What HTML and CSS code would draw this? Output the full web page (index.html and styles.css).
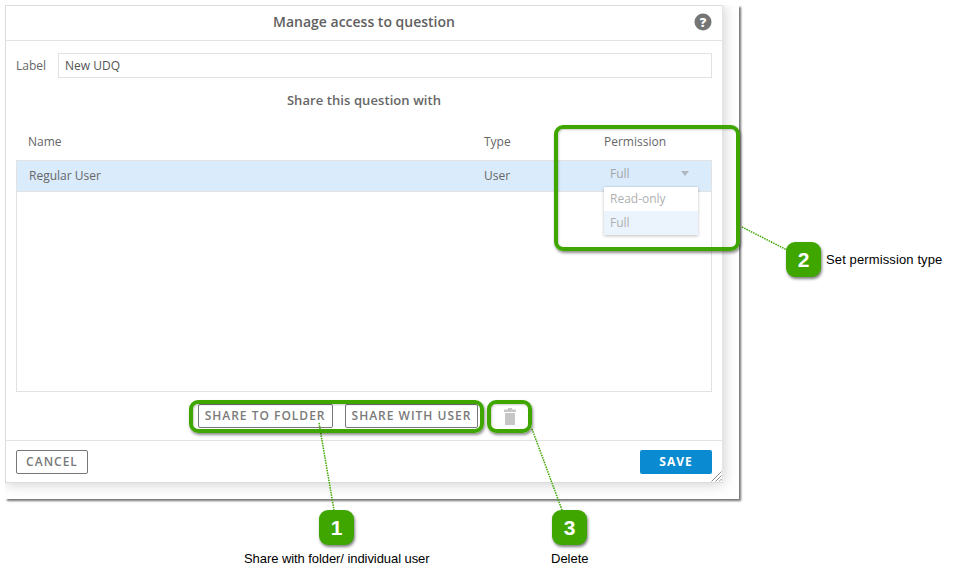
FILE: index.html
```html
<!DOCTYPE html>
<html lang="en">
<head>
<meta charset="utf-8">
<title>Manage access to question</title>
<link rel="stylesheet" href="styles.css">
</head>
<body>
<div class="shot">
  <div class="window">
    <div class="dialog">
      <header class="head">
        <h1 class="title">Manage access to question</h1>
        <svg class="help" width="18" height="18" viewBox="0 0 18 18"><circle cx="9" cy="9" r="8.5" fill="#757575"/><text x="9" y="13.5" text-anchor="middle" class="help-mark">?</text></svg>
      </header>
      <div class="body">
        <div class="label-row">
          <span class="label">Label</span>
          <div class="input">New UDQ</div>
        </div>
        <h2 class="sub">Share this question with</h2>
        <div class="cols">
          <span>Name</span><span>Type</span><span>Permission</span>
        </div>
        <div class="table">
          <div class="row">
            <span class="cell-name">Regular User</span>
            <span>User</span>
            <div class="select">
              <span>Full</span><i class="caret"></i>
              <div class="menu">
                <div class="opt">Read-only</div>
                <div class="opt opt-on">Full</div>
              </div>
            </div>
          </div>
        </div>
        <div class="actions">
          <button class="btn">SHARE TO FOLDER</button>
          <button class="btn">SHARE WITH USER</button>
          <svg class="trash" width="12" height="17" viewBox="0 0 12 17"><path fill="#c6c6c6" d="M4 0h4v1.500h4V4H0V1.500h4zM1 5h10v12H1z"/></svg>
        </div>
      </div>
      <footer class="foot">
        <button class="btn btn-cancel">CANCEL</button>
        <button class="btn-save">SAVE</button>
      </footer>
      <svg class="grip" width="11" height="11" viewBox="0 0 11 11"><path d="M0.500 10.500L10.500 0.500M4.500 10.500L10.500 4.500M8 10.500L10.500 8" stroke="#8a8a8a" stroke-width="1" fill="none"/></svg>
    </div>
  </div>

  <svg class="lines" width="958" height="582" viewBox="0 0 958 582">
    <g stroke="#3fa600" stroke-width="1.500" stroke-dasharray="1.500 1" fill="none">
      <path d="M319 423L334 510"/>
      <path d="M532 429L562 510"/>
      <path d="M742 227L787 250"/>
    </g>
  </svg>
  <div class="ring ring-perm"></div>
  <div class="ring ring-share"></div>
  <div class="ring ring-trash"></div>
  <div class="badge badge-1">1</div>
  <div class="badge badge-2">2</div>
  <div class="badge badge-3">3</div>
  <span class="note note-1">Share with folder/ individual user</span>
  <span class="note note-2">Set permission type</span>
  <span class="note note-3">Delete</span>
</div>
</body>
</html>
```
FILE: styles.css
```css
* { box-sizing: border-box; }
html, body { margin: 0; padding: 0; background: #fff; }
.shot {
  position: relative;
  width: 958px;
  height: 582px;
  padding: 5px 0 0 5px;
  overflow: hidden;
  font-family: "Open Sans", sans-serif;
  font-size: 12px;
  color: #666;
}
.window {
  width: 734px;
  height: 494px;
  background: #fff;
  overflow: hidden;
  box-shadow: 2px 2px 2px rgba(0, 0, 0, .55);
}
.dialog {
  position: relative;
  display: flex;
  flex-direction: column;
  width: 718px;
  height: 478px;
  background: #fff;
  border: 1px solid #dcdcdc;
  border-right-color: #e4e4e4;
  box-shadow: 0 0 14px rgba(0, 0, 0, .22);
}
.head {
  position: relative;
  flex: none;
  height: 35px;
  padding-bottom: 4px;
  display: flex;
  align-items: center;
  justify-content: center;
  border-bottom: 1px solid #e2e2e2;
}
.title {
  margin: 0;
  font-size: 14px;
  font-weight: 600;
  color: #5f5f5f;
}
.help { position: absolute; left: 688px; top: 7px; }
.help-mark { font-family: "Open Sans", sans-serif; font-size: 13px; font-weight: 800; fill: #fff; }
.body {
  flex: 1;
  display: flex;
  flex-direction: column;
  padding: 12px 10px 0;
}
.label-row { display: flex; align-items: center; height: 25px; }
.label { width: 42px; color: #666; }
.input {
  flex: 1;
  height: 25px;
  padding: 0 6px;
  line-height: 23px;
  border: 1px solid #e2e2e2;
  color: #555;
}
.sub {
  margin: 14px 0 0;
  height: 17px;
  line-height: 17px;
  text-align: center;
  font-size: 13px;
  font-weight: 600;
  letter-spacing: .08px;
  color: #666;
}
.cols {
  display: grid;
  grid-template-columns: 456px 120px 1fr;
  height: 51px;
  padding: 24px 0 0 12px;
  line-height: 17px;
  color: #666;
}
.table {
  height: 232px;
  border: 1px solid #e2e2e2;
}
.row {
  display: grid;
  grid-template-columns: 455px 120px 94px;
  align-items: center;
  height: 31px;
  padding: 0 0 2px 12px;
  background: #daebfc;
  border-bottom: 1px solid #e2e2e2;
  color: #666;
}
.select {
  position: relative;
  display: flex;
  align-items: center;
  justify-content: space-between;
  align-self: start;
  height: 26px;
  padding: 0 9px 0 6px;
  border-bottom: 1px solid #d3e1ee;
  color: #a6a6a6;
}
.caret {
  width: 0;
  height: 0;
  border-left: 4.500px solid transparent;
  border-right: 4.500px solid transparent;
  border-top: 5px solid #aeb7bf;
}
.menu {
  position: absolute;
  left: 0;
  top: 26px;
  width: 94px;
  background: #fff;
  box-shadow: 0 1px 3px rgba(0, 0, 0, .25);
}
.opt { height: 24px; padding: 0 6px; line-height: 24px; color: #b0b0b0; }
.opt-on { background: #ebf4fd; }
.actions {
  display: flex;
  align-items: center;
  justify-content: center;
  gap: 12px;
  height: 24px;
  margin-top: 12px;
  padding-right: 14px;
}
.btn {
  height: 24px;
  padding: 0 6px 2px;
  background: #fff;
  border: 1px solid #777;
  border-radius: 2px;
  font-family: "Open Sans", sans-serif;
  font-size: 12px;
  font-weight: 600;
  letter-spacing: 1px;
  color: #7a7a7a;
}
.trash { margin-left: 14px; }
.foot {
  flex: none;
  display: flex;
  align-items: flex-start;
  justify-content: space-between;
  height: 44px;
  margin-top: 12px;
  padding: 9px 10px 0;
  border-top: 1px solid #e2e2e2;
}
.btn-cancel { width: 72px; height: 24px; padding: 0 0 2px; }
.btn-save {
  width: 72px;
  height: 24px;
  padding: 0 0 2px;
  border: 0;
  border-radius: 2px;
  background: #0a8ad0;
  font-family: "Open Sans", sans-serif;
  font-size: 12px;
  font-weight: 700;
  letter-spacing: 1px;
  color: #fff;
}
.grip { position: absolute; right: 0; bottom: 0; }
.lines { position: absolute; left: 0; top: 0; }
.ring {
  position: absolute;
  border: 4px solid #3fa600;
  border-radius: 9px;
  box-shadow: 1px 2px 3px rgba(0, 0, 0, .45), inset 1px 1px 2px rgba(0, 0, 0, .2);
}
.ring-perm { left: 554px; top: 125px; width: 186px; height: 126px; }
.ring-share { left: 189px; top: 400px; width: 295px; height: 33px; }
.ring-trash { left: 487px; top: 400px; width: 45px; height: 33px; }
.badge {
  position: absolute;
  width: 35px;
  height: 35px;
  border-radius: 9px;
  background: #3fa600;
  box-shadow: 1px 2px 3px rgba(0, 0, 0, .5);
  text-align: center;
  line-height: 35px;
  font-family: "Liberation Sans", sans-serif;
  font-size: 21px;
  font-weight: 700;
  color: #fff;
}
.badge-1 { left: 319px; top: 510px; }
.badge-2 { left: 786px; top: 242px; }
.badge-3 { left: 552px; top: 510px; }
.note {
  position: absolute;
  font-family: "Liberation Sans", sans-serif;
  font-size: 13px;
  line-height: 14px;
  color: #000;
  white-space: nowrap;
}
.note-1 { left: 244px; top: 552px; letter-spacing: -.07px; }
.note-2 { left: 826px; top: 253px; letter-spacing: .12px; }
.note-3 { left: 551px; top: 552px; }
```
